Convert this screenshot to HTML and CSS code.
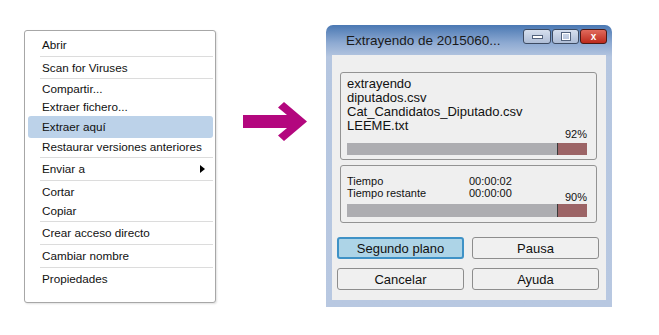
FILE: index.html
```html
<!DOCTYPE html>
<html lang="es">

<head>
  <meta charset="UTF-8">
  <meta name="viewport" content="width=device-width, initial-scale=1.0">
  <title>Extraer aquí</title>
  <link rel="stylesheet" href="styles.css">
</head>

<body>
  <div class="stage">
    <div class="menu">
      <div class="menu-item">Abrir</div>
      <div class="menu-sep"></div>
      <div class="menu-item pair">Scan for Viruses</div>
      <div class="menu-sep"></div>
      <div class="menu-item compact">Compartir...</div>
      <div class="menu-item compact">Extraer fichero...</div>
      <div class="menu-item active">Extraer aquí</div>
      <div class="menu-item compact">Restaurar versiones anteriores</div>
      <div class="menu-sep"></div>
      <div class="menu-item has-sub">Enviar a<span class="sub-arrow"></span></div>
      <div class="menu-sep"></div>
      <div class="menu-item pair">Cortar</div>
      <div class="menu-item pair">Copiar</div>
      <div class="menu-sep"></div>
      <div class="menu-item">Crear acceso directo</div>
      <div class="menu-sep"></div>
      <div class="menu-item">Cambiar nombre</div>
      <div class="menu-sep"></div>
      <div class="menu-item">Propiedades</div>
    </div>

    <svg class="arrow" width="70" height="48" viewBox="0 0 70 48">
      <polygon points="2,17 46,17 37,9.5 43,4 66,23.5 43,43 37,37.5 46,30 2,30" fill="#b3077e" />
    </svg>

    <div class="window">
      <div class="titlebar">
        <span class="title">Extrayendo de 2015060...</span>
        <div class="caption-buttons">
          <span class="cap-btn min"><span class="glyph-min"></span></span>
          <span class="cap-btn max"><span class="glyph-max"></span></span>
          <span class="cap-btn close">x</span>
        </div>
      </div>

      <div class="window-body">
        <div class="group files">
          <div class="file-list">
            <div>extrayendo</div>
            <div>diputados.csv</div>
            <div>Cat_Candidatos_Diputado.csv</div>
            <div>LEEME.txt</div>
          </div>
          <div class="pct">92%</div>
          <div class="bar"><div class="bar-fill" style="width: 88%"></div></div>
        </div>

        <div class="group times">
          <div class="time-grid">
            <span>Tiempo</span><span>00:00:02</span>
            <span>Tiempo restante</span><span>00:00:00</span>
          </div>
          <div class="pct">90%</div>
          <div class="bar tall"><div class="bar-fill" style="width: 88%"></div></div>
        </div>

        <div class="buttons">
          <button type="button" class="btn primary">Segundo plano</button>
          <button type="button" class="btn">Pausa</button>
          <button type="button" class="btn">Cancelar</button>
          <button type="button" class="btn">Ayuda</button>
        </div>
      </div>
    </div>
  </div>
</body>

</html>
```

FILE: styles.css
```css
body {
  margin: 0;
  background-color: #fff;
  font-family: "Liberation Sans", Arial, sans-serif;
  color: #111;
}

.stage {
  display: flex;
  align-items: flex-start;
  padding: 25px 0 0 24px;
}

/* context menu */

.menu {
  width: 192px;
  box-sizing: border-box;
  margin-top: 5px;
  padding: 4px 2px 13px 3px;
  background-color: #fff;
  border: 1px solid #a7a7a7;
  border-radius: 3px;
  box-shadow: 1px 1px 2px rgba(0, 0, 0, 0.12);
  font-size: 11.7px;
}

.menu-item {
  height: 20px;
  line-height: 20px;
  padding-left: 14px;
  white-space: nowrap;
}

.menu-item.pair {
  height: 19px;
  line-height: 19px;
}

.menu-item.compact {
  height: 18px;
  line-height: 18px;
}

.menu-item.active {
  height: 22px;
  line-height: 22px;
  background-color: #bcd2e9;
  border-radius: 3px;
}

.menu-item.has-sub {
  display: flex;
  justify-content: space-between;
  align-items: center;
  padding-right: 8px;
}

.sub-arrow {
  width: 0;
  height: 0;
  border-top: 4px solid transparent;
  border-bottom: 4px solid transparent;
  border-left: 5px solid #000;
}

.menu-sep {
  height: 1px;
  margin: 1px 0 1px 12px;
  background-color: #dcdcdc;
}

.arrow {
  margin-left: 25px;
  margin-top: 73px;
}

/* extraction window */

.window {
  width: 286px;
  margin-left: 15px;
  background: linear-gradient(#4a78b3 0, #8eaad2 18px, #b5c6e0 32px, #b8c8e1 100%);
  border-radius: 7px 7px 0 0;
}

.titlebar {
  display: flex;
  justify-content: space-between;
  align-items: flex-start;
  height: 30px;
  padding: 4px 5px 0 20px;
  box-sizing: border-box;
}

.title {
  margin-top: 4px;
  font-size: 13.5px;
  line-height: 16px;
  color: #1a1a1a;
}

.caption-buttons {
  display: flex;
  gap: 1px;
}

.cap-btn {
  display: flex;
  align-items: center;
  justify-content: center;
  width: 27px;
  height: 15px;
  box-sizing: border-box;
  border: 1px solid #3d4b62;
  border-radius: 3px;
  background: linear-gradient(#d6dfee, #aebdd6);
}

.cap-btn.min {
  width: 28px;
}

.glyph-min {
  width: 9px;
  height: 2px;
  background-color: #fff;
  border: 1px solid #52627c;
  margin-top: 1px;
}

.glyph-max {
  width: 6px;
  height: 5px;
  border: 1px solid #fff;
  outline: 1px solid #52627c;
}

.cap-btn.close {
  background: linear-gradient(#e06a5c, #bd2a1c);
  border-color: #4a1a16;
  color: #fff;
  font-size: 10px;
  font-weight: bold;
  line-height: 12px;
}

.window-body {
  margin: 0 6px 7px 6px;
  padding: 17px 7px 10px 5px;
  background-color: #efefef;
}

.group {
  margin: 0 2px 0 3px;
  border: 1px solid #939393;
  border-radius: 3px;
  padding: 4px 9px 4px 6px;
}

.file-list {
  font-size: 13px;
  line-height: 14px;
}

.pct {
  text-align: right;
  font-size: 11px;
  line-height: 12px;
  margin-top: -5px;
}

.bar {
  height: 12px;
  margin-top: 3px;
  background-color: #9c6466;
}

.bar.tall {
  height: 13px;
  margin-top: 1px;
}

.bar-fill {
  height: 100%;
  box-sizing: border-box;
  background-color: #adadb1;
  border-right: 1px solid #3a3a3a;
}

.group.times {
  margin-top: 5px;
  padding-top: 9px;
  padding-bottom: 5px;
}

.time-grid {
  display: grid;
  grid-template-columns: 122px auto;
  font-size: 11px;
  line-height: 12px;
}

.group.times .pct {
  margin-top: -8px;
}

.buttons {
  display: grid;
  grid-template-columns: 127px 127px;
  grid-auto-rows: 22px;
  column-gap: 8px;
  row-gap: 9px;
  margin-top: 14px;
}

.btn {
  font-family: "Liberation Sans", Arial, sans-serif;
  font-size: 13px;
  color: #111;
  background-color: #f0f0f0;
  border: 1px solid #8d8d8d;
  border-radius: 3px;
  padding: 0;
}

.btn.primary {
  background-color: #add4e7;
  border: 2px solid #3f92c6;
}
```
